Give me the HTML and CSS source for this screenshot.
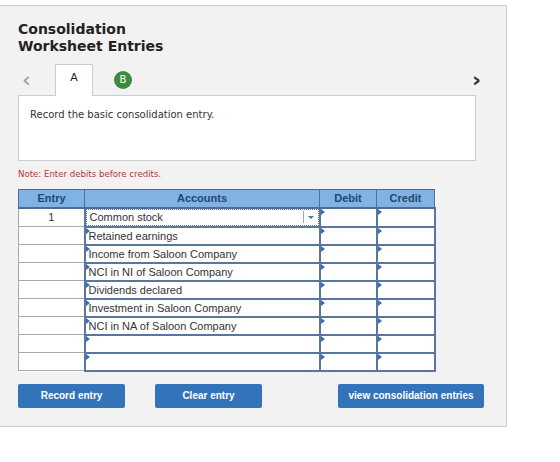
FILE: index.html
```html
<!DOCTYPE html>
<html lang="en">
<head>
  <meta charset="UTF-8">
  <meta name="viewport" content="width=device-width, initial-scale=1">
  <title>Consolidation Worksheet Entries</title>
  <link rel="stylesheet" href="styles.css">
</head>
<body>
  <div class="panel">
    <h1>Consolidation<br>Worksheet Entries</h1>

    <div class="tabs">
      <span class="arrow prev">&lsaquo;</span>
      <span class="tab active">A</span>
      <span class="tab-dot">B</span>
      <span class="arrow next">&rsaquo;</span>
    </div>

    <div class="question">Record the basic consolidation entry.</div>

    <p class="note">Note: Enter debits before credits.</p>

    <table class="journal">
      <colgroup>
        <col class="c-entry">
        <col class="c-acct">
        <col class="c-num">
        <col class="c-num2">
      </colgroup>
      <tr>
        <th>Entry</th>
        <th>Accounts</th>
        <th>Debit</th>
        <th>Credit</th>
      </tr>
      <tr>
        <td class="entry">1</td>
        <td class="in focus"><div class="select"><span>Common stock</span><span class="caret"></span></div></td>
        <td class="in mark"></td>
        <td class="in mark"></td>
      </tr>
      <tr><td class="entry"></td><td class="in mark">Retained earnings</td><td class="in mark"></td><td class="in mark"></td></tr>
      <tr><td class="entry"></td><td class="in mark">Income from Saloon Company</td><td class="in mark"></td><td class="in mark"></td></tr>
      <tr><td class="entry"></td><td class="in mark">NCI in NI of Saloon Company</td><td class="in mark"></td><td class="in mark"></td></tr>
      <tr><td class="entry"></td><td class="in mark">Dividends declared</td><td class="in mark"></td><td class="in mark"></td></tr>
      <tr><td class="entry"></td><td class="in mark">Investment in Saloon Company</td><td class="in mark"></td><td class="in mark"></td></tr>
      <tr><td class="entry"></td><td class="in mark">NCI in NA of Saloon Company</td><td class="in mark"></td><td class="in mark"></td></tr>
      <tr><td class="entry"></td><td class="in mark"></td><td class="in mark"></td><td class="in mark"></td></tr>
      <tr><td class="entry"></td><td class="in mark"></td><td class="in mark"></td><td class="in mark"></td></tr>
    </table>

    <div class="actions">
      <button class="btn">Record entry</button>
      <button class="btn">Clear entry</button>
      <button class="btn wide">view consolidation entries</button>
    </div>
  </div>
</body>
</html>
```

FILE: styles.css
```css
body {
  margin: 0;
  background: #fff;
  font-family: "DejaVu Sans", Verdana, sans-serif;
}
.panel {
  margin-top: 5px;
  width: 507px;
  box-sizing: border-box;
  border: 1px solid #ccc;
  border-left: none;
  background: #f2f2f2;
  padding: 15px 22px 18px 18px;
}
h1 {
  margin: 0;
  font-size: 14px;
  line-height: 17px;
  font-weight: bold;
  color: #222;
}
.tabs {
  display: flex;
  align-items: center;
  height: 31px;
  margin-top: 9px;
  position: relative;
}
.arrow {
  font-size: 22px;
  line-height: 20px;
  width: 37px;
  padding-left: 4px;
  box-sizing: border-box;
}
.prev {
  color: #999;
}
.next {
  margin-left: auto;
  width: auto;
  color: #333;
  font-weight: bold;
  padding-right: 3px;
}
.tab {
  align-self: flex-end;
  width: 38px;
  height: 32px;
  box-sizing: border-box;
  background: #fff;
  border: 1px solid #ccc;
  border-bottom: none;
  margin-bottom: -1px;
  position: relative;
  z-index: 1;
  text-align: center;
  font-size: 11px;
  line-height: 26px;
  color: #222;
}
.tab-dot {
  margin-left: 21px;
  width: 18px;
  height: 18px;
  border-radius: 50%;
  background: #3d8b3d;
  color: #fff;
  font-size: 10px;
  line-height: 18px;
  text-align: center;
}
.question {
  width: 458px;
  height: 66px;
  box-sizing: border-box;
  background: #fff;
  border: 1px solid #ccc;
  padding: 13px 11px 0;
  font-size: 10px;
  color: #333;
}
.note {
  margin: 8px 0 0;
  font-size: 8.6px;
  line-height: 10px;
  color: #b03a3a;
}
.journal {
  margin-top: 10px;
  border-collapse: collapse;
  table-layout: fixed;
  width: 416px;
  font-family: "Liberation Sans", Arial, sans-serif;
  font-size: 11px;
  background: #fff;
}
.c-entry { width: 66px; }
.c-acct { width: 235px; }
.c-num { width: 57px; }
.c-num2 { width: 58px; }
.journal tr {
  height: 18px;
}
.journal th {
  height: 16px;
  padding: 0;
  background: #80b2e4;
  color: #23466f;
  font-weight: bold;
  border: 1px solid #4f6d93;
  border-bottom: 2px solid #4f6d93;
}
.journal td {
  height: 16px;
  padding: 0 0 0 3px;
  color: #333;
  white-space: nowrap;
  overflow: hidden;
}
.journal td.entry {
  text-align: center;
  padding: 0;
  border: 1px solid #aaa;
}
.journal td.in {
  border: 2px solid #5876a0;
  position: relative;
}
.journal td.mark::before {
  content: "";
  position: absolute;
  left: 0;
  top: 0;
  border-left: 4px solid #3b6db3;
  border-top: 3px solid transparent;
  border-bottom: 3px solid transparent;
}
.journal td.focus {
  padding: 0;
}
.select {
  display: flex;
  align-items: center;
  height: 15px;
  border: 1px dotted #5b7ca6;
  padding-left: 3px;
}
.caret {
  margin-left: auto;
  width: 14px;
  height: 12px;
  border-left: 1px solid #9ab;
  position: relative;
}
.caret::after {
  content: "";
  position: absolute;
  left: 4px;
  top: 5px;
  border-top: 3px solid #4a74ad;
  border-left: 3px solid transparent;
  border-right: 3px solid transparent;
}
.actions {
  display: flex;
  margin-top: 12px;
}
.btn {
  width: 107px;
  height: 24px;
  border: none;
  border-radius: 2px;
  background: #3373ba;
  color: #fff;
  font-family: "Liberation Sans", Arial, sans-serif;
  font-size: 10px;
  font-weight: bold;
  margin-right: 30px;
  padding: 0;
}
.btn.wide {
  width: 146px;
  margin-left: auto;
  margin-right: 0;
}
```
